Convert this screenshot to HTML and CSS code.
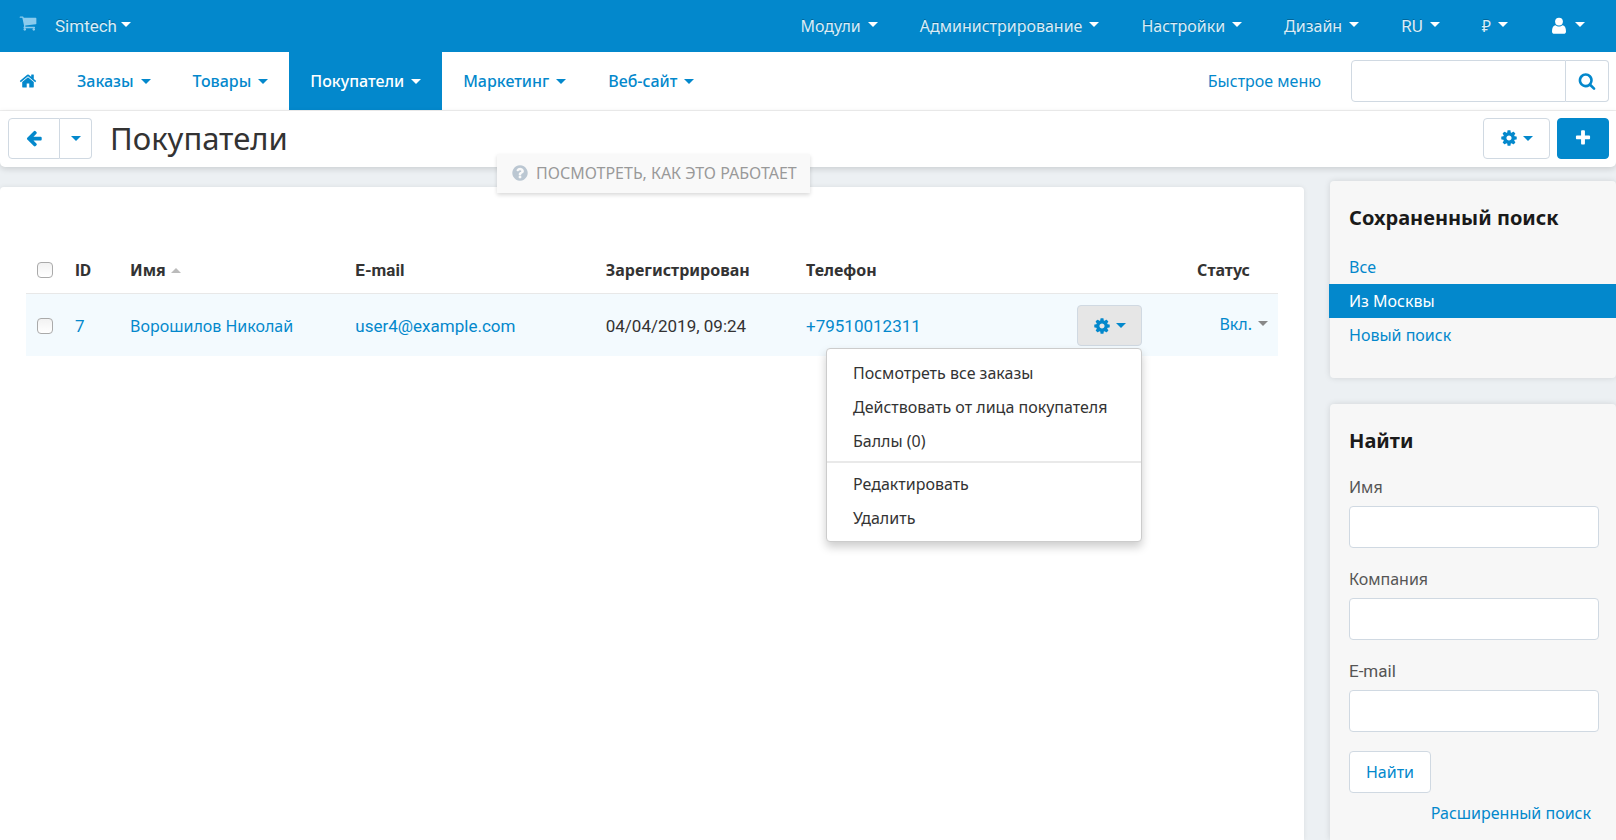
FILE: index.html
```html
<!DOCTYPE html>
<html lang="ru">
<head>
<meta charset="utf-8">
<meta name="viewport" content="width=device-width, initial-scale=1">
<title>Покупатели</title>
<link rel="stylesheet" href="styles.css">
</head>
<body>
<svg class="sprite" aria-hidden="true">
  <symbol id="i-cart" viewBox="0 0 1792 1792"><path d="M704 1536q0 52-38 90t-90 38-90-38-38-90 38-90 90-38 90 38 38 90zm896 0q0 52-38 90t-90 38-90-38-38-90 38-90 90-38 90 38 38 90zm128-1088v512q0 24-16.500 42.500t-40.500 21.500l-1044 122q13 60 13 70 0 16-24 64h920q26 0 45 19t19 45-19 45-45 19h-1024q-26 0-45-19t-19-45q0-11 8-31.500t16-36 21.500-40 15.500-29.500l-177-823h-204q-26 0-45-19t-19-45 19-45 45-19h256q16 0 28.500 6.500t19.500 15.500 13 24.500 8 26 5.500 29.500 4.500 26h1201q26 0 45 19t19 45z"/></symbol>
  <symbol id="i-home" viewBox="0 0 1792 1792"><path d="M1472 992v480q0 26-19 45t-45 19h-384v-384h-256v384h-384q-26 0-45-19t-19-45v-480q0-1 .5-3t.5-3l575-474 575 474q1 2 1 6zm223-69l-62 74q-8 9-21 11h-3q-13 0-21-7l-692-577-692 577q-12 8-24 7-13-2-21-11l-62-74q-8-10-7-23.500t11-21.500l719-599q32-26 76-26t76 26l244 204v-195q0-14 9-23t23-9h192q14 0 23 9t9 23v408l219 182q10 8 11 21.500t-7 23.500z"/></symbol>
  <symbol id="i-cog" viewBox="0 0 1792 1792"><path d="M1152 896q0-106-75-181t-181-75-181 75-75 181 75 181 181 75 181-75 75-181zm512-109v222q0 12-8 23t-20 13l-185 28q-19 54-39 91 35 50 107 138 10 12 10 25t-9 23q-27 37-99 108t-94 71q-12 0-26-9l-138-108q-44 23-91 38-16 136-29 186-7 28-36 28h-222q-14 0-24.500-8.500t-11.500-21.500l-28-184q-49-16-90-37l-141 107q-10 9-25 9-14 0-25-11-126-114-165-168-7-10-7-23 0-12 8-23 15-21 51-66.500t54-70.500q-27-50-41-99l-183-27q-13-2-21-12.500t-8-23.500v-222q0-12 8-23t19-13l186-28q14-46 39-92-40-57-107-138-10-12-10-24 0-10 9-23 26-36 98.500-107.500t94.500-71.500q13 0 26 10l138 107q44-23 91-38 16-136 29-186 7-28 36-28h222q14 0 24.500 8.500t11.500 21.500l28 184q49 16 90 37l142-107q9-9 24-9 13 0 25 10 129 119 165 170 7 8 7 22 0 12-8 23-15 21-51 66.500t-54 70.500q26 50 41 98l183 28q13 2 21 12.500t8 23.500z"/></symbol>
  <symbol id="i-plus" viewBox="0 0 1792 1792"><path d="M1600 736v192q0 40-28 68t-68 28h-416v416q0 40-28 68t-68 28h-192q-40 0-68-28t-28-68v-416h-416q-40 0-68-28t-28-68v-192q0-40 28-68t68-28h416v-416q0-40 28-68t68-28h192q40 0 68 28t28 68v416h416q40 0 68 28t28 68z"/></symbol>
  <symbol id="i-search" viewBox="0 0 1792 1792"><path d="M1216 832q0-185-131.500-316.500t-316.500-131.500-316.500 131.500-131.500 316.500 131.500 316.500 316.500 131.500 316.500-131.500 131.500-316.500zm512 832q0 52-38 90t-90 38q-54 0-90-38l-343-342q-179 124-399 124-143 0-273.500-55.500t-225-150-150-225-55.500-273.500 55.500-273.500 150-225 225-150 273.500-55.500 273.500 55.500 225 150 150 225 55.500 273.500q0 220-124 399l343 343q37 37 37 90z"/></symbol>
  <symbol id="i-user" viewBox="0 0 18 18"><circle cx="9" cy="4.600" r="3.900"/><path d="M2 14.500C2 10.600 3.200 8.300 5.600 8.200C6.500 9.100 7.700 9.500 9 9.500C10.300 9.500 11.500 9.100 12.400 8.200C14.800 8.300 16 10.600 16 14.500C16 16 15.100 16.800 13.600 16.800H4.400C2.900 16.800 2 16 2 14.500Z"/></symbol>
  <symbol id="i-help" viewBox="0 0 1792 1792"><path d="M1024 1376v-192q0-14-9-23t-23-9h-192q-14 0-23 9t-9 23v192q0 14 9 23t23 9h192q14 0 23-9t9-23zm256-672q0-88-55.500-163t-138.500-116-170-41q-243 0-371 213-15 24 8 42l132 100q7 6 19 6 16 0 25-12 53-68 86-92 34-24 86-24 48 0 85.500 26t37.500 59q0 38-20 61t-68 45q-63 28-115.500 86.500t-52.500 125.500v36q0 14 9 23t23 9h192q14 0 23-9t9-23q0-19 21.500-49.500t54.500-49.500q32-18 49-28.500t46-35 44.500-48 28-60.500 12.500-81zm384 192q0 209-103 385.500t-279.500 279.500-385.500 103-385.500-103-279.500-279.500-103-385.500 103-385.500 279.500-279.500 385.500-103 385.500 103 279.500 279.500 103 385.500z"/></symbol>
  <symbol id="i-back" viewBox="0 0 1792 1792"><path d="M1664 896v128q0 53-32.500 90.500t-84.500 37.500h-704l293 294q38 36 38 90t-38 90l-75 76q-37 37-90 37-52 0-91-37l-651-652q-37-37-37-90 0-52 37-91l651-650q38-38 91-38 52 0 90 38l75 74q38 38 38 91t-38 91l-293 293h704q52 0 84.500 37.500t32.500 90.500z"/></symbol>
</svg>

<header class="topbar">
  <a class="cart" href="#" aria-label="Витрина"><svg class="icon"><use href="#i-cart"/></svg></a>
  <button class="top-item brand latin" type="button">Simtech<span class="caret"></span></button>
  <nav class="top-menu" aria-label="Администрирование">
    <button class="top-item" type="button">Модули<span class="caret"></span></button>
    <button class="top-item" type="button">Администрирование<span class="caret"></span></button>
    <button class="top-item" type="button">Настройки<span class="caret"></span></button>
    <button class="top-item" type="button">Дизайн<span class="caret"></span></button>
    <button class="top-item latin" type="button">RU<span class="caret"></span></button>
    <button class="top-item" type="button">₽<span class="caret"></span></button>
    <button class="top-item" type="button" aria-label="Профиль"><svg class="icon icon-user"><use href="#i-user"/></svg><span class="caret"></span></button>
  </nav>
</header>

<div class="navbar">
  <nav class="main-menu" aria-label="Основное меню">
    <a class="home" href="#" aria-label="Главная"><svg class="icon"><use href="#i-home"/></svg></a>
    <a class="nav-item" href="#">Заказы<span class="caret"></span></a>
    <a class="nav-item" href="#">Товары<span class="caret"></span></a>
    <a class="nav-item active" href="#">Покупатели<span class="caret"></span></a>
    <a class="nav-item" href="#">Маркетинг<span class="caret"></span></a>
    <a class="nav-item" href="#">Веб-сайт<span class="caret"></span></a>
  </nav>
  <a class="quick-menu" href="#">Быстрое меню</a>
  <form class="search" role="search">
    <input class="search-input" type="text" aria-label="Поиск">
    <button class="search-button" type="button" aria-label="Искать"><svg class="icon"><use href="#i-search"/></svg></button>
  </form>
</div>

<div class="actions">
  <div class="button-group">
    <button class="btn back" type="button" aria-label="Назад"><svg class="icon"><use href="#i-back"/></svg></button>
    <button class="btn history" type="button" aria-label="История"><span class="caret"></span></button>
  </div>
  <h1 class="title">Покупатели</h1>
  <button class="btn tools" type="button" aria-label="Действия"><svg class="icon"><use href="#i-cog"/></svg><span class="caret"></span></button>
  <button class="btn primary" type="button" aria-label="Добавить"><svg class="icon"><use href="#i-plus"/></svg></button>
  <a class="help-tab" href="#"><svg class="icon"><use href="#i-help"/></svg>ПОСМОТРЕТЬ, КАК ЭТО РАБОТАЕТ</a>
</div>

<div class="page">
  <main class="content">
    <table class="customers">
      <colgroup><col class="c-check"><col class="c-id"><col class="c-name"><col class="c-mail"><col class="c-date"><col class="c-phone"><col class="c-tools"><col class="c-status"></colgroup>
      <thead>
        <tr>
          <th><input class="check" type="checkbox" aria-label="Выбрать всех"></th>
          <th class="latin">ID</th>
          <th>Имя<span class="sort"></span></th>
          <th class="latin">E-mail</th>
          <th>Зарегистрирован</th>
          <th>Телефон</th>
          <th></th>
          <th class="status-head">Статус</th>
        </tr>
      </thead>
      <tbody>
        <tr>
          <td><input class="check" type="checkbox" aria-label="Выбрать покупателя"></td>
          <td class="latin"><a href="#">7</a></td>
          <td><a href="#">Ворошилов Николай</a></td>
          <td class="latin"><a href="#">user4@example.com</a></td>
          <td class="latin">04/04/2019, 09:24</td>
          <td class="latin"><a href="#">+79510012311</a></td>
          <td>
            <div class="dropdown">
              <button class="btn row-tools" type="button" aria-label="Действия с покупателем" aria-expanded="true"><svg class="icon"><use href="#i-cog"/></svg><span class="caret"></span></button>
              <ul class="menu">
                <li><a href="#">Посмотреть все заказы</a></li>
                <li><a href="#">Действовать от лица покупателя</a></li>
                <li><a href="#">Баллы (0)</a></li>
                <li class="divider"></li>
                <li><a href="#">Редактировать</a></li>
                <li><a href="#">Удалить</a></li>
              </ul>
            </div>
          </td>
          <td class="status"><button class="status-button" type="button">Вкл.<span class="caret"></span></button></td>
        </tr>
      </tbody>
    </table>
  </main>

  <aside class="sidebar">
    <section class="panel">
      <h2 class="panel-title">Сохраненный поиск</h2>
      <ul class="saved">
        <li><a href="#">Все</a></li>
        <li><a class="selected" href="#">Из Москвы</a></li>
        <li><a href="#">Новый поиск</a></li>
      </ul>
    </section>
    <section class="panel panel-search">
      <h2 class="panel-title">Найти</h2>
      <form class="find">
        <label for="f-name">Имя</label>
        <input class="field" id="f-name" type="text">
        <label for="f-company">Компания</label>
        <input class="field" id="f-company" type="text">
        <label class="latin" for="f-email">E-mail</label>
        <input class="field" id="f-email" type="text">
        <button class="btn find-button" type="button">Найти</button>
        <a class="advanced" href="#">Расширенный поиск</a>
      </form>
    </section>
  </aside>
</div>
</body>
</html>
```

FILE: styles.css
```css
* { box-sizing: border-box; }

body {
  margin: 0;
  min-height: 100vh;
  display: flex;
  flex-direction: column;
  background: #ecf0f3;
  color: #333;
  font: 16px/24px "Noto Sans", "Open Sans", sans-serif;
}

a { color: #0388cc; text-decoration: none; }
button, input { font: inherit; margin: 0; }
button { padding: 0; border: 0; background: none; cursor: pointer; }
ul { list-style: none; margin: 0; padding: 0; }

.latin { font-family: Roboto, sans-serif; font-size: 17px; }
.sprite { position: absolute; width: 0; height: 0; }
.icon { width: 18px; height: 18px; fill: currentColor; flex: none; }

.caret {
  flex: none;
  border: 5px solid transparent;
  border-top-color: currentColor;
  border-bottom: 0;
}

/* Top bar */
.topbar {
  height: 52px;
  padding: 0 31px 0 19px;
  display: flex;
  align-items: center;
  background: #0388cc;
}
.cart { display: flex; margin: 0 18px 6px 0; color: #8acbed; }
.top-item {
  display: flex;
  align-items: center;
  gap: 7px;
  color: #d9edf7;
  text-shadow: 0 -1px 0 rgba(0, 0, 0, .25);
}
.top-item .caret { color: #fff; margin-bottom: 3px; }
.brand { gap: 4px; }
.top-menu { display: flex; gap: 42px; margin-left: auto; }
.icon-user { color: #fff; }

/* Main navigation */
.navbar {
  height: 59px;
  padding-right: 7px;
  display: flex;
  align-items: center;
  background: #fff;
  border-bottom: 1px solid #f0f0f0;
}
.main-menu { display: flex; align-self: stretch; margin-right: auto; }
.home { display: flex; align-items: center; padding: 0 19px; }
.nav-item {
  display: flex;
  align-items: center;
  gap: 7px;
  padding: 0 21px;
  font-weight: 500;
}
.nav-item.active { background: #0388cc; color: #fff; }
.quick-menu { margin-right: 30px; }
.search { display: flex; height: 42px; }
.search-input {
  width: 215px;
  border: 1px solid #d0d9e2;
  border-radius: 4px 0 0 4px;
  padding: 0 10px;
}
.search-button {
  width: 43px;
  display: flex;
  align-items: center;
  justify-content: center;
  border: 1px solid #d0d9e2;
  border-left: 0;
  border-radius: 0 4px 4px 0;
  color: #0388cc;
}

/* Title bar */
.actions {
  position: relative;
  height: 56px;
  padding: 0 7px 2px 8px;
  display: flex;
  align-items: center;
  gap: 7px;
  background: #fff;
  border-radius: 0 0 5px 5px;
  box-shadow: 0 2px 6px rgba(0, 0, 0, .14);
}
.btn {
  height: 41px;
  display: flex;
  align-items: center;
  justify-content: center;
  gap: 5px;
  background: #fff;
  border: 1px solid #d0d9e2;
  border-radius: 4px;
  color: #0388cc;
}
.button-group { display: flex; }
.back { width: 52px; border-radius: 4px 0 0 4px; }
.history { width: 32px; border-left: 0; border-radius: 0 4px 4px 0; }
.title {
  margin: 0 auto 0 11px;
  font-size: 31px;
  line-height: 40px;
  font-weight: 400;
}
.tools { width: 67px; }
.primary { width: 52px; background: #0388cc; border-color: #0388cc; color: #fff; }
.help-tab {
  position: absolute;
  top: 43px;
  left: 497px;
  height: 39px;
  padding: 0 13px 2px 14px;
  display: flex;
  align-items: center;
  gap: 7px;
  background: #f9f9f9;
  color: #999;
  box-shadow: 0 2px 4px rgba(0, 0, 0, .15);
}
.help-tab .icon { color: #bbc7d2; }

/* Page */
.page { flex: 1; display: flex; gap: 26px; }
.content {
  flex: 1;
  min-width: 0;
  margin-top: 20px;
  padding: 58px 26px 0;
  background: #fff;
  border-radius: 4px 4px 0 0;
  box-shadow: 0 0 5px rgba(0, 0, 0, .08);
}

.customers { width: 100%; border-collapse: collapse; table-layout: fixed; }
.c-check { width: 49px; }
.c-id { width: 55px; }
.c-name { width: 18%; }
.c-mail { width: 20%; }
.c-date { width: 16%; }
.c-tools { width: 84px; }
.c-status { width: 117px; }
th, td { padding: 0; text-align: left; white-space: nowrap; }
th { height: 48px; padding-top: 2px; border-bottom: 1px solid #e8e8e8; font-weight: 700; }
td { height: 63px; padding-top: 2px; background: #f3fafe; }
.check {
  appearance: none;
  display: block;
  width: 16px;
  height: 16px;
  margin-left: 11px;
  border: 1px solid #aaa;
  border-radius: 4px;
  background: linear-gradient(#f2f2f2, #fff);
}
.sort {
  display: inline-block;
  margin: 0 0 2px 5px;
  border: 5px solid transparent;
  border-bottom-color: #bbb;
  border-top: 0;
  vertical-align: middle;
}
.status-head { padding-right: 28px; text-align: right; }
.status { padding: 0 10px 2px 0; }
.status-button { display: flex; align-items: center; gap: 6px; margin-left: auto; color: #0388cc; }
.status-button .caret { color: #888; }

.dropdown { position: relative; width: 65px; }
.row-tools { width: 65px; background: #e6e6e6; }
.menu {
  position: absolute;
  z-index: 2;
  top: 43px;
  right: 0;
  min-width: 316px;
  padding: 7px 0 6px;
  background: #fff;
  border: 1px solid #ccc;
  border-radius: 4px;
  box-shadow: 0 5px 10px rgba(0, 0, 0, .2);
}
.menu a { display: block; padding: 5px 26px; color: #333; }
.divider { height: 2px; margin: 3px 0 4px; background: #e9e9e9; }

/* Sidebar */
.sidebar { width: 286px; padding-top: 14px; display: flex; flex-direction: column; gap: 26px; }
.panel {
  padding: 24px 17px 26px 19px;
  background: #f7f7f7;
  border-radius: 4px;
  box-shadow: 0 0 6px rgba(0, 0, 0, .12);
}
.panel-search { flex: 1; padding-bottom: 12px; border-radius: 4px 4px 0 0; }
.panel-title { margin: 0 0 21px; font-size: 20px; line-height: 26px; color: #1a1a1a; }
.saved { margin: -2px -17px 0 -20px; }
.saved a { display: block; padding: 5px 20px; }
.saved .selected { background: #0388cc; color: #fff; }
.find { display: flex; flex-direction: column; }
.find label { margin-bottom: 7px; color: #555; }
.field {
  width: 100%;
  height: 42px;
  margin-bottom: 19px;
  padding: 0 10px;
  border: 1px solid #d0d9e2;
  border-radius: 4px;
  background: #fff;
}
.find-button { width: 82px; height: 42px; margin-bottom: 8px; }
.advanced { align-self: flex-end; margin-right: 8px; }
```
